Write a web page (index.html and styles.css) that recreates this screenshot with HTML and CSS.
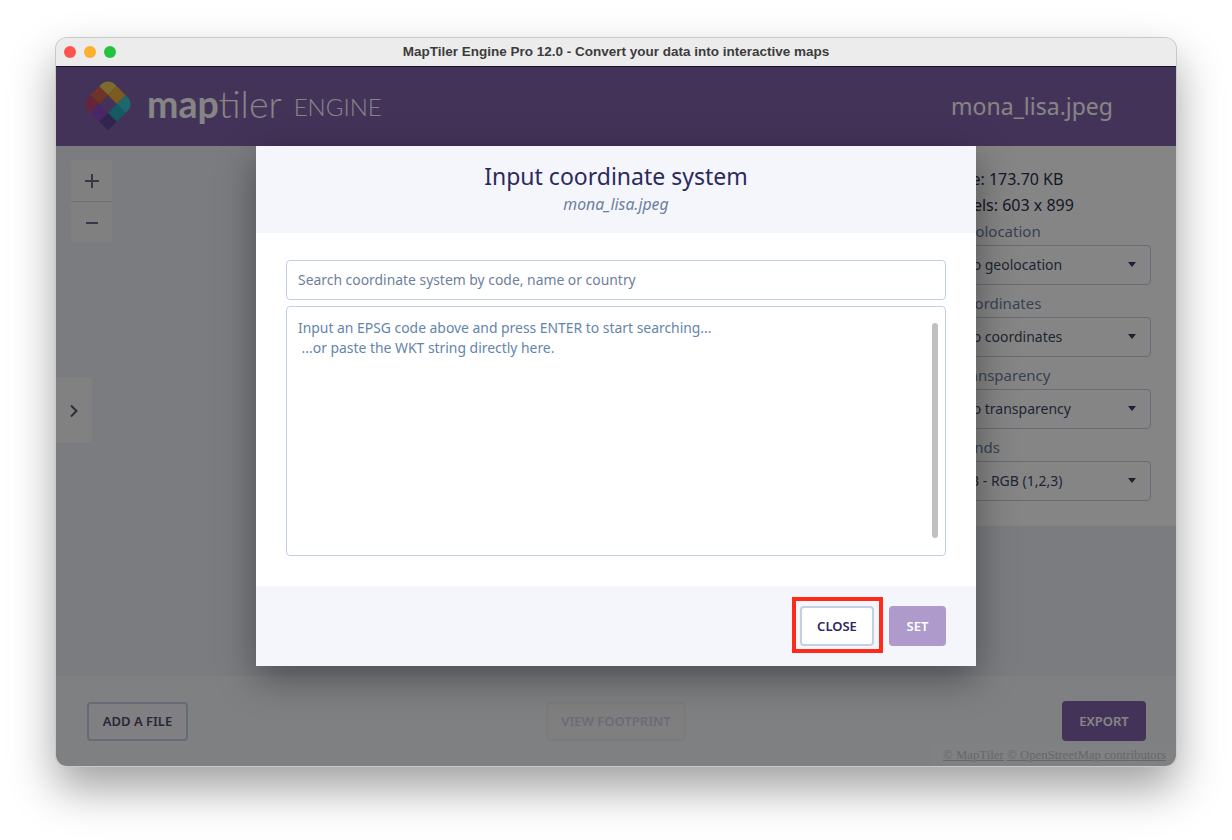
FILE: index.html
```html
<!DOCTYPE html>
<html lang="en">
<head>
<meta charset="utf-8">
<title>MapTiler Engine</title>
<link rel="stylesheet" href="styles.css">
</head>
<body>
<div class="window">
  <div class="titlebar">
    <div class="lights"><span class="light red"></span><span class="light yellow"></span><span class="light green"></span></div>
    <div class="wintitle">MapTiler Engine Pro 12.0 - Convert your data into interactive maps</div>
  </div>
  <div class="app">
    <header class="header">
      <div class="brand">
        <svg class="logo" width="60" height="60" viewBox="-30 -30 60 60">
          <defs>
            <clipPath id="logoclip">
              <rect x="-18.9" y="-18.9" width="37.8" height="37.8" rx="10"/>
              <rect x="0" y="0" width="18.9" height="18.9"/>
            </clipPath>
          </defs>
          <g transform="rotate(45)" clip-path="url(#logoclip)">
            <rect x="-18.9" y="-18.9" width="12.6" height="12.6" fill="#f0cc5c"/>
            <rect x="-6.3" y="-18.9" width="12.6" height="12.6" fill="#f0ad38"/>
            <rect x="6.3" y="-18.9" width="12.6" height="12.6" fill="#36c9cd"/>
            <rect x="-18.9" y="-6.3" width="12.6" height="12.6" fill="#d6624c"/>
            <rect x="6.3" y="-6.3" width="12.6" height="12.6" fill="#2aabbd"/>
            <rect x="-18.9" y="6.3" width="12.6" height="12.6" fill="#c24577"/>
            <rect x="-6.3" y="6.3" width="12.6" height="12.6" fill="#8a4cc8"/>
            <rect x="6.3" y="6.3" width="12.6" height="12.6" fill="#5f4796"/>
          </g>
        </svg>
        <span class="wordmark"><b>map</b>tiler</span>
        <span class="engine">ENGINE</span>
      </div>
      <div class="filename">mona_lisa.jpeg</div>
    </header>
    <main class="content">
      <div class="zoom">
        <button class="zoombtn"><svg width="16" height="16" viewBox="0 0 16 16"><path d="M1 8h14M8 1v14" stroke="#6a6a8c" stroke-width="2" fill="none"/></svg></button>
        <button class="zoombtn"><svg width="16" height="16" viewBox="0 0 16 16"><path d="M2 8h12" stroke="#6a6a8c" stroke-width="2" fill="none"/></svg></button>
      </div>
      <button class="collapse"><svg width="10" height="14" viewBox="0 0 10 14"><path d="M2 1.500 7.500 7 2 12.500" stroke="#555a6e" stroke-width="2" fill="none"/></svg></button>
      <aside class="panel">
        <p class="info">Size: 173.70 KB</p>
        <p class="info">Pixels: 603 x 899</p>
        <p class="label">Geolocation</p>
        <div class="select">No geolocation<span class="caret"></span></div>
        <p class="label">Coordinates</p>
        <div class="select">No coordinates<span class="caret"></span></div>
        <p class="label">Transparency</p>
        <div class="select">No transparency<span class="caret"></span></div>
        <p class="label">Bands</p>
        <div class="select">3B - RGB (1,2,3)<span class="caret"></span></div>
      </aside>
    </main>
    <footer class="footer">
      <div class="foot-left"><button class="btn outline">ADD A FILE</button></div>
      <button class="btn disabled">VIEW FOOTPRINT</button>
      <div class="foot-right"><button class="btn primary">EXPORT</button></div>
      <div class="attrib"><a href="#">© MapTiler</a> <a href="#">© OpenStreetMap contributors</a></div>
    </footer>
    <div class="backdrop"></div>
    <div class="modal">
      <div class="modal-head">
        <h1 class="modal-title">Input coordinate system</h1>
        <div class="modal-sub">mona_lisa.jpeg</div>
      </div>
      <div class="modal-body">
        <div class="field">Search coordinate system by code, name or country</div>
        <div class="area">
          <div class="area-text">Input an EPSG code above and press ENTER to start searching...<br>&nbsp;...or paste the WKT string directly here.</div>
          <div class="scrollthumb"></div>
        </div>
      </div>
      <div class="modal-foot">
        <span class="highlight"><button class="btn close">CLOSE</button></span>
        <button class="btn set">SET</button>
      </div>
    </div>
  </div>
</div>
</body>
</html>
```
FILE: styles.css
```css
* { box-sizing: border-box; }
html, body { margin: 0; height: 100%; }
body {
  background: #fff;
  padding: 38px 56px 0;
  font-family: "Noto Sans", "Open Sans", sans-serif;
  overflow: hidden;
}
p { margin: 0; }
button { font-family: inherit; cursor: pointer; }

.window {
  width: 1120px;
  height: 728px;
  border-radius: 11px;
  overflow: hidden;
  display: flex;
  flex-direction: column;
  box-shadow: 0 0 0 1px #c9c9c9, 0 22px 45px rgba(0, 0, 0, .38);
  background: #ececec;
}
.titlebar {
  height: 29px;
  flex: none;
  display: flex;
  align-items: center;
  justify-content: center;
  position: relative;
  background: #ececec;
  border-bottom: 1px solid #17102a;
  padding-bottom: 2px;
}
.lights { position: absolute; left: 8px; top: 8px; display: flex; gap: 8px; }
.light { width: 12px; height: 12px; border-radius: 50%; }
.red { background: #fd5451; }
.yellow { background: #fdb02e; }
.green { background: #24c33e; }
.wintitle {
  font-family: "Liberation Sans", sans-serif;
  font-weight: 700;
  font-size: 13.500px;
  color: #3c3c3c;
}

.app { flex: 1; display: flex; flex-direction: column; position: relative; min-height: 0; }

.header {
  height: 79px;
  flex: none;
  background: #8362ab;
  display: flex;
  align-items: center;
  justify-content: space-between;
  padding: 0 63px 0 22px;
  color: #fff;
}
.brand { display: flex; align-items: center; }
.logo { display: block; flex: none; margin-top: -5px; }
.wordmark {
  font-family: Lato, sans-serif;
  font-weight: 300;
  font-size: 37.500px;
  line-height: 1;
  margin-left: 9px;
  margin-top: -6px;
}
.wordmark b { font-weight: 700; }
.engine {
  font-family: Lato, sans-serif;
  font-weight: 300;
  font-size: 24px;
  margin-left: 12px;
}
.filename { font-size: 23px; margin-top: -2px; }

.content {
  flex: 1;
  background: #eceef6;
  position: relative;
  display: flex;
  justify-content: flex-end;
  align-items: flex-start;
  min-height: 0;
}
.zoom {
  position: absolute;
  left: 15px;
  top: 14px;
  width: 41px;
  border-radius: 4px;
  background: #f5f5f5;
  display: flex;
  flex-direction: column;
}
.zoombtn {
  height: 41px;
  border: 0;
  padding: 0;
  background: none;
  display: flex;
  align-items: center;
  justify-content: center;
}
.zoombtn + .zoombtn { height: 42px; border-top: 1px solid #d8d8d8; }
.collapse {
  position: absolute;
  left: 0;
  top: 232px;
  width: 36px;
  height: 65px;
  border: 0;
  padding: 0;
  border-radius: 0 4px 4px 0;
  background: #f7f7f7;
  display: flex;
  align-items: center;
  justify-content: center;
}
.panel {
  width: 240px;
  height: 380px;
  background: #fff;
  padding: 20px 25px 0 13px;
  font-size: 16px;
  color: #2a3048;
}
.info { height: 26px; line-height: 26px; padding-left: 2px; }
.label { height: 27px; line-height: 26px; padding-left: 7px; font-size: 15px; color: #6d7f9c; }
.select {
  height: 40px;
  border: 1px solid #c1cfe4;
  border-radius: 4px;
  padding: 0 12px;
  font-size: 14px;
  line-height: 38px;
  position: relative;
  margin-bottom: 5px;
  color: #3d4a63;
}
.caret {
  position: absolute;
  right: 14px;
  top: 16px;
  border-left: 4px solid transparent;
  border-right: 4px solid transparent;
  border-top: 5px solid #3a3d5c;
}

.footer {
  height: 90px;
  flex: none;
  background: #f3f5fa;
  position: relative;
  display: grid;
  grid-template-columns: 1fr auto 1fr;
  align-items: start;
  padding: 25px 30px 0;
}
.foot-right { display: flex; justify-content: flex-end; }
.btn {
  display: block;
  height: 40px;
  border-radius: 4px;
  font-size: 13px;
  font-weight: 600;
  padding: 0;
}
.outline { width: 101px; height: 39px; margin: 1px 0 0 1px; padding-bottom: 2px; background: #f6f4f7; border: 2px solid #c3cfe3; color: #4a4c70; }
.disabled { width: 140px; height: 39px; margin-top: 1px; padding-bottom: 2px; background: #f4f4f6; border: 2px solid #e9ebf3; color: #ced0e3; }
.primary { width: 84px; background: #8362ab; border: 0; color: #fff; }
.attrib {
  position: absolute;
  right: 0;
  bottom: 0;
  padding: 4px 10px 4px 11px;
  background: rgba(255, 255, 255, .3);
  font-family: "Liberation Serif", serif;
  font-size: 12.800px;
  line-height: 14px;
  white-space: nowrap;
}
.attrib a { color: #c4c6cf; }

.backdrop { position: absolute; inset: 0; background: rgba(0, 0, 0, .48); }

.modal {
  position: absolute;
  left: 200px;
  top: 79px;
  width: 720px;
  height: 520px;
  background: #fff;
  display: flex;
  flex-direction: column;
  box-shadow: 0 12px 36px rgba(0, 0, 0, .38);
}
.modal-head {
  height: 87px;
  flex: none;
  background: #f5f6fc;
  text-align: center;
  padding-top: 14px;
}
.modal-title {
  margin: 0;
  font-size: 23px;
  font-weight: 400;
  line-height: 33px;
  color: #2b2a5e;
}
.modal-sub {
  font-size: 15.800px;
  font-style: italic;
  line-height: 22px;
  color: #6d7f9c;
}
.modal-body {
  flex: 1;
  padding: 27px 30px 30px;
  display: flex;
  flex-direction: column;
  gap: 6px;
}
.field, .area {
  border: 1px solid #c1cfe4;
  border-radius: 4px;
  font-size: 13.900px;
  color: #6d7f9c;
}
.field { height: 40px; line-height: 37px; padding: 0 11px; }
.area { flex: 1; padding: 11px 11px; line-height: 20px; position: relative; color: #6484ab; }
.scrollthumb {
  position: absolute;
  right: 7px;
  top: 16px;
  width: 6px;
  height: 215px;
  border-radius: 3px;
  background: #c1c1c1;
}
.modal-foot {
  height: 80px;
  flex: none;
  background: #f5f6fc;
  display: flex;
  align-items: center;
  justify-content: flex-end;
  padding: 0 30px;
  gap: 6px;
}
.highlight {
  border: 4px solid #ff2a1a;
  padding: 5px 5px 3px 4px;
  display: flex;
  margin-top: -2px;
  width: 91px;
  height: 56px;
}
.close { width: 74px; background: #fff; border: 2px solid #c3cfe3; color: #2b2a5e; }
.set { width: 57px; background: #ae9acb; border: 0; color: #fff; }
```
